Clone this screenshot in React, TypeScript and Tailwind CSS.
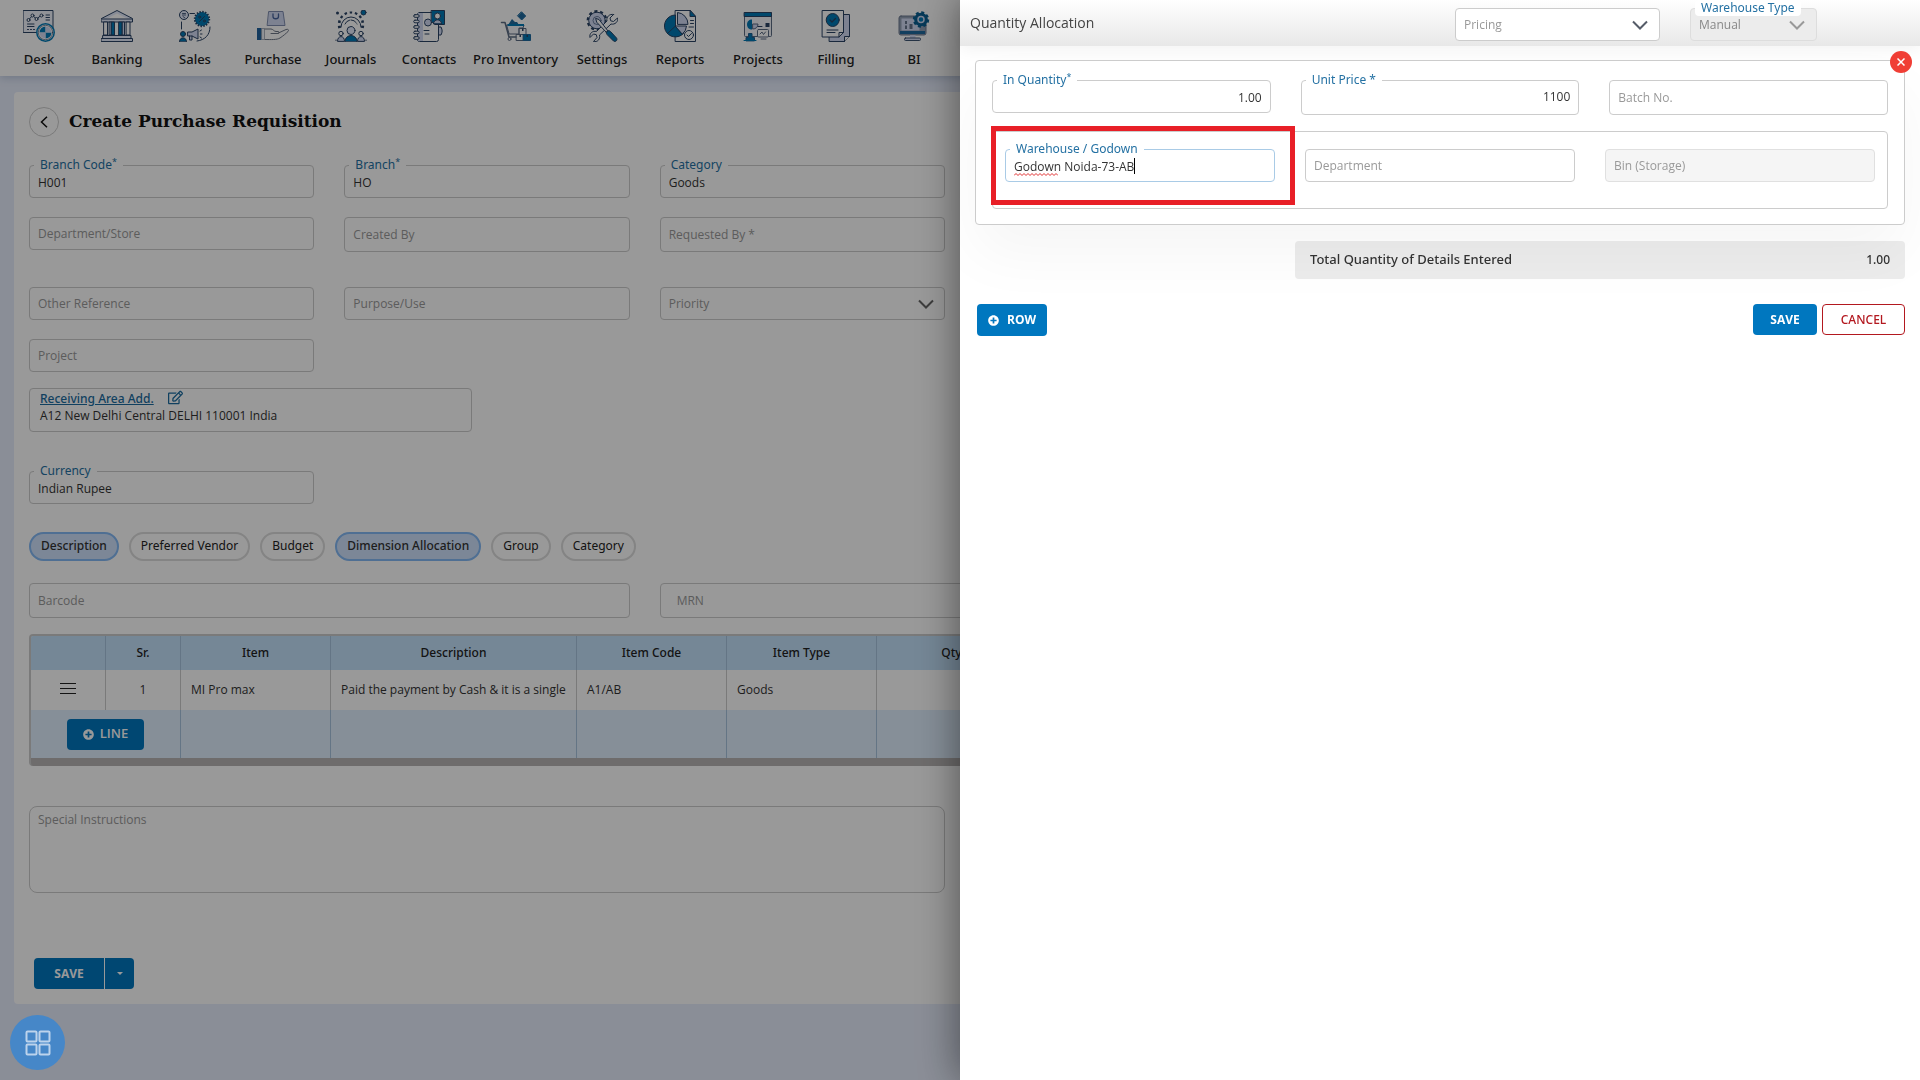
import type { ReactNode } from 'react';
import { FaPlusCircle, FaRegEdit } from 'react-icons/fa';

const navy = '#2a4365';
const blue = '#0079b5';
const pale = '#d0d9f2';

const Icon = ({ children }: { children: ReactNode }) => (
    <svg viewBox="0 0 32 32" className="size-8" fill="none" stroke={navy} strokeWidth="1" strokeLinecap="round" strokeLinejoin="round" aria-hidden="true">
        {children}
    </svg>
);

const DeskIcon = () => (
    <Icon>
        <path d="M0.5 .5h29.500v22h-29.500z" fill="#f1f4fc" />
        <path d="M5.500 10l4-4.500 4 3.500 4.500-3.500" />
        <circle cx="5.500" cy="10" r="1.500" fill="#fff" />
        <circle cx="9.500" cy="5.500" r="1.500" fill="#fff" />
        <circle cx="13.500" cy="9" r="1.500" fill="#fff" />
        <circle cx="18.500" cy="5.500" r="1.500" fill="#fff" />
        <path d="M23 5h3.500M23 7.500h3.500M23 10h3.500M4.500 14h6.500M4.500 16.500h6.500" />
        <path d="M4.500 19.500h7" strokeDasharray="1 2" />
        <circle cx="22.500" cy="22.500" r="8.700" fill="#fff" stroke={blue} strokeWidth="1.500" />
        <circle cx="22.500" cy="22.500" r="7.200" strokeWidth=".6" />
        <path d="M22.500 22.500v-6a6 6 0 0 0-6 6zM22.500 22.500v6a6 6 0 0 0 6-6z" fill={blue} stroke="none" />
        <path d="M22.500 22.500v-6a6 6 0 0 1 6 6zM22.500 22.500v6a6 6 0 0 1-6-6z" fill={pale} stroke="none" />
    </Icon>
);

const BankingIcon = () => (
    <Icon>
        <path d="M.5 8.500L16 .5l15.500 8v3.500H.5z" fill="#e3e9fb" />
        <path d="M5 9h22L16 3.500z" fill="#fff" stroke="none" />
        <path d="M1 9h30" />
        <path d="M3 12h3.500v13H3zM25.500 12h3.500v13h-3.500z" fill="#fff" />
        <path d="M8.500 12h2v13h-2zM21.500 12h2v13h-2z" fill={pale} />
        <path d="M10.500 12h3v13h-3zM18 12h3v13h-3z" fill={blue} />
        <path d="M2 25.500h28v3H2zM.5 28.500h31v3H.5z" fill="#e3e9fb" />
    </Icon>
);

const SalesIcon = () => (
    <Icon>
        <circle cx="5" cy="5" r="4.500" fill="#e3e9fb" />
        <path d="M3.500 3.500h3M3.500 5h3M4 6.500l2 1.500" strokeWidth=".8" />
        <path d="M11 3.500h4.500M2.500 12v7M31 17c0 8-5 13-13 14" />
        <circle cx="23" cy="9" r="7" fill={blue} stroke={navy} strokeWidth="2.400" strokeDasharray="1.400 1.350" strokeLinecap="butt" />
        <circle cx="23" cy="9" r="6.500" fill={blue} stroke="none" />
        <path d="M20.500 11.500l5-5" />
        <circle cx="20.700" cy="7" r="1" />
        <circle cx="25.400" cy="11" r="1" />
        <circle cx="4" cy="24" r="2.500" fill={blue} />
        <path d="M.5 31.500c0-5 7-5 7 0z" fill={blue} />
        <path d="M9 22h4l6-3v10l-6-3H9zM10.500 26v4h2.500v-4" fill={pale} />
        <path d="M21 21l1.500-1M21.500 24H23M21 27l1.500 1" />
    </Icon>
);

const PurchaseIcon = () => (
    <Icon>
        <g stroke="#7f8db0">
            <path d="M12 1.500h14l2 14H10.500z" fill={pale} />
            <path d="M16 4v2.500c0 3 5.500 3 5.500 0V4" stroke="#47639c" strokeWidth="1.300" />
        </g>
        <path d="M0 18h4.500v12H0z" fill="#20639f" stroke="none" />
        <path d="M5 18.500h2.500v11H5z" fill="#f3f5fb" stroke="#8b93a3" strokeWidth=".7" />
        <path d="M8 19h6c2 0 3 2.500 5 2.500h2c1.500 0 1.500 2 0 2h-7M21.500 23l7.500-3.500c2-.8 3.300.7 2 2-2 2-5 4.500-8 6.500-3 2-9 1.500-15 1.500" stroke="#6f7889" />
    </Icon>
);

const JournalsIcon = () => (
    <Icon>
        <path d="M5 18a11.500 11.500 0 1 1 22 0" strokeWidth="3.500" strokeDasharray="2.400 2.600" strokeLinecap="butt" />
        <path d="M7 17a9.500 9.500 0 1 1 18 0" stroke="#fff" strokeWidth="2" />
        <path d="M6 17a10 10 0 1 1 20 0" />
        <path d="M10 14a6.500 6.500 0 0 1 12 0" strokeDasharray="6 1.500" />
        <circle cx="2.500" cy="3" r="1.500" fill={navy} stroke="none" />
        <circle cx="28.500" cy="2.500" r="2.500" fill={blue} />
        <circle cx="16" cy="20.500" r="4" fill="#e3e9fb" />
        <path d="M10 31.500c0-8 12-8 12 0z" fill={blue} />
        <circle cx="6" cy="23.500" r="2.200" fill="#fff" />
        <circle cx="26" cy="23.500" r="2.200" fill="#fff" />
        <path d="M2.500 31c0-6 7-6 7 0zM22.500 31c0-6 7-6 7 0z" fill={pale} />
        <path d="M1 30v.5M31 30v.5" />
    </Icon>
);

const ContactsIcon = () => (
    <Icon>
        <rect x="4.500" y="2.500" width="21" height="29" rx="2" fill="#fff" />
        <path d="M5 3h5v28H5z" fill={pale} stroke="none" />
        <path d="M26 17h2c1.500 3 1.500 5 0 8h-2" fill={pale} />
        {[6, 11.5, 17, 22.5, 28].map((y) => (
            <rect key={y} x=".7" y={y - 1.3} width="5.500" height="2.600" rx="1.300" fill="#fff" />
        ))}
        <path d="M18.500 .5h13v14H22l-3.500-3z" fill={blue} />
        <circle cx="24.500" cy="6" r="3" fill="#fff" />
        <path d="M20.500 13.500c0-5 8-5 8 0z" fill={pale} />
        <circle cx="15" cy="12.500" r="3.500" fill={pale} />
        <path d="M11 20.500h5M12 24h4" />
    </Icon>
);

const InventoryIcon = () => (
    <Icon>
        <path d="M21.700 2l4 4-4 4-4-4z" fill="#1f6a9e" stroke="#1f6a9e" />
        <path d="M8 15l4-6 3 3h2l2 3z" fill="#1f6a9e" stroke="none" />
        <path d="M1.500 12.500h3.500l4 14.500h8" stroke="#5b6b83" strokeWidth="1.500" />
        <path d="M7 15h17l-1 3h-4v6H9.500z" fill="#f3f5fb" stroke="#5b6b83" />
        <path d="M7.500 14h16.500v2H7.500z" fill={blue} stroke="none" />
        <circle cx="9.500" cy="29" r="1.500" stroke="#5b6b83" />
        <path d="M19.500 18.500h6.500v6h-6.500z" fill="#fff" stroke="#5b6b83" />
        <path d="M16.500 24.500h7v6h-7z" fill="#fff" stroke="#5b6b83" />
        <path d="M23.500 24.500h7v6h-7z" fill={blue} stroke="#1f6a9e" />
        <path d="M22 18.500v2.500h1.500v-2.500zM26.500 25v2h1.500v-2zM19.500 25v2h1.500v-2z" fill={navy} stroke="none" />
    </Icon>
);

const SettingsIcon = () => (
    <Icon>
        <circle cx="11" cy="10.500" r="9" stroke={navy} strokeWidth="2.800" strokeDasharray="3 2.650" strokeLinecap="butt" />
        <circle cx="11" cy="10.500" r="8.300" fill={pale} />
        <circle cx="11" cy="10.500" r="4" strokeWidth=".6" />
        <path d="M27.500 4.500l-3.500 3.500.7 2.800 2.800.7L31.500 8c1 3.500-2.500 7-6.500 6L13.500 25c1 4-2 7.500-6 6.500l3.500-4-.7-2.800-2.800-.7-3.500 3.500c-1-4 2.500-7 6.500-6L21 11c-1-4 2.500-7.500 6.500-6.500z" fill="#fff" />
        <path d="M10 8.500l3 1L22 21l-1.500 1.500L11 12.500z" fill="#fff" />
        <path d="M20.500 22c1-1.500 2.500-2 4-.5l6 6.500c1.500 2-1 4.500-3 3L21.500 25c-1-1-1.500-2-1-3z" fill={blue} />
    </Icon>
);

const ReportsIcon = () => (
    <Icon>
        <path d="M11.500 .5H26l5.500 6v25h-20z" fill="#fff" />
        <path d="M26 .5v6h5.500z" fill={blue} />
        <path d="M11.500 16V5a11 11 0 1 0 8 18.500z" fill={blue} />
        <path d="M11.500 16l-8 7.500" />
        <path d="M11.500 16h11a11 11 0 0 1-4 8z" fill={pale} />
        <path d="M13.500 14V2.500A11.500 11.500 0 0 1 24 14z" fill={pale} />
        <circle cx="25" cy="25" r="4.500" fill="#fff" />
        <path d="M23 25l1.500 1.500 3-3M26.500 10.500h3M26.500 13.500h3M25 17h4.500" />
    </Icon>
);

const ProjectsIcon = () => (
    <Icon>
        <rect x="2.500" y="2.500" width="27" height="24" rx="1" fill="#f3f5fb" stroke="#5b6b83" />
        <path d="M2.500 2.500h27v4h-27z" fill={blue} stroke={navy} />
        <path d="M10 9.500v10c-3 0-5-2-5-5s2-5 5-5z" fill={blue} stroke="none" />
        <path d="M11 14h5c0 3-2 5-5 5z" fill={pale} stroke="#5b6b83" />
        <path d="M23.500 13h4v4h-4z" fill={navy} stroke="none" />
        <path d="M16 16.500h4" />
        <path d="M4 30.500v-3h2.500v-4H10v4h2.500v3z" fill={blue} stroke="#1f5c8f" />
        <path d="M2 30.500h12" stroke={blue} />
        <rect x="15.500" y="19.500" width="11" height="7.500" rx="1" fill="#fff" stroke="#5b6b83" />
        <path d="M18 24l2-2 1.500 2.500 2-2.500M19 29h5" stroke="#5b6b83" />
    </Icon>
);

const FillingIcon = () => (
    <Icon>
        <path d="M9.500 4.500h20v22l-5 5h-15z" fill={pale} />
        <path d="M24.500 31.500v-5h5" fill="#fff" />
        <path d="M2.500 .5h21v22l-4.500 4.500H2.500z" fill="#fff" />
        <path d="M19 27v-4.500h4.500" />
        <circle cx="12.700" cy="10" r="6.500" fill={blue} />
        <path d="M10 10l2 2 3.500-3.500" stroke={navy} strokeWidth="1.300" />
        <path d="M7 20h11M7 22.500h8" />
    </Icon>
);

const BIIcon = () => (
    <Icon>
        <rect x="1" y="6" width="27" height="19" rx="2" fill="#93a0b5" stroke="#6c7a90" />
        <path d="M3.500 8.500h18v12h-18z" fill={pale} stroke="none" />
        <path d="M2 21h25v3H2z" fill="#1f6a9e" stroke="none" />
        <path d="M7 11h2v3H7zM7 15.500h2V19H7zM11.500 14h3v5h-3z" fill="#66758c" stroke="none" />
        <path d="M12 25h5.500v3H12z" fill={pale} stroke="none" />
        <rect x="6.500" y="28" width="16" height="2.500" rx="1" fill={pale} stroke="#3f5573" />
        <circle cx="23" cy="9.500" r="6.800" fill={blue} stroke="#0b5f91" strokeWidth="2.800" strokeDasharray="2.900 2.440" strokeLinecap="butt" />
        <circle cx="23" cy="9.500" r="6.500" fill="#0b5f91" stroke="none" />
        <circle cx="23" cy="9.500" r="3" fill={blue} stroke={pale} strokeWidth="1.500" />
    </Icon>
);

const menu = [
    { label: 'Desk', icon: <DeskIcon /> },
    { label: 'Banking', icon: <BankingIcon /> },
    { label: 'Sales', icon: <SalesIcon /> },
    { label: 'Purchase', icon: <PurchaseIcon /> },
    { label: 'Journals', icon: <JournalsIcon /> },
    { label: 'Contacts', icon: <ContactsIcon /> },
    { label: 'Pro Inventory', icon: <InventoryIcon /> },
    { label: 'Settings', icon: <SettingsIcon /> },
    { label: 'Reports', icon: <ReportsIcon /> },
    { label: 'Projects', icon: <ProjectsIcon /> },
    { label: 'Filling', icon: <FillingIcon /> },
    { label: 'BI', icon: <BIIcon /> },
];

const Chevron = ({ className }: { className: string }) => (
    <svg viewBox="0 0 16 10" className={`pointer-events-none absolute top-3 h-[10px] w-4 ${className}`} fill="none" stroke="currentColor" strokeWidth="2" aria-hidden="true">
        <path d="M1 1.500l7 7 7-7" />
    </svg>
);

type FieldProps = {
    id: string;
    label: string;
    value?: string;
    required?: boolean;
    tall?: boolean;
    right?: boolean;
    focus?: boolean;
    disabled?: boolean;
    indent?: boolean;
    className?: string;
    children?: ReactNode;
};

// Outlined text box, the label floats on the border once there is a value
const Field = ({ id, label, value, required, tall, right, focus, disabled, indent, className = '', children }: FieldProps) => (
    <div className={`relative ${className}`}>
        <input
            id={id}
            type="text"
            defaultValue={value}
            placeholder={value ? undefined : label}
            aria-label={value ? undefined : label}
            disabled={disabled}
            spellCheck={false}
            className={`block w-full rounded border text-xs text-[#333] placeholder:text-[#999] ${tall ? 'h-[35px]' : 'h-[33px]'} ${value && !tall ? 'pt-[2px]' : ''} ${value && tall ? 'pb-[2px]' : ''} ${indent ? 'px-4' : 'px-2'} ${right ? 'text-right' : ''} ${focus ? 'border-[#a9cbe6]' : disabled ? 'border-[#e0e0e0] bg-[#f5f5f5]' : 'border-[#ccc]'}`}
        />
        {value && (
            <label htmlFor={id} className="absolute -top-2 left-[5px] bg-white px-1.5 font-[Noto_Sans] text-xs/[16px] text-[#2471a3]">
                {label}
                {required && <sup className="text-[9px]">*</sup>}
            </label>
        )}
        {children}
    </div>
);

const chips = [
    { label: 'Description', on: true },
    { label: 'Preferred Vendor' },
    { label: 'Budget' },
    { label: 'Dimension Allocation', on: true },
    { label: 'Group' },
    { label: 'Category' },
];

const Requisition = () => (
    <div className="min-h-screen bg-[#e7edfc]">
        <nav className="flex h-[76px] bg-white shadow-[0_2px_8px_rgba(60,90,130,0.25)]">
            {menu.map((item) => (
                <a key={item.label} href="#" className="flex min-w-[78px] flex-col items-center px-[5px] pt-[10px] font-[Noto_Sans] text-[13px]/[18px] font-medium whitespace-nowrap text-[#222]">
                    {item.icon}
                    <span className="mt-2">{item.label}</span>
                </a>
            ))}
        </nav>

        <main className="mx-[14px] mt-4 rounded bg-white p-[15px]">
            <div className="flex items-center gap-[10px]">
                <button type="button" aria-label="Back" className="flex size-[30px] items-center justify-center rounded-full border border-[#ccc]">
                    <svg viewBox="0 0 8 12" className="h-3 w-2" fill="none" stroke="#111" strokeWidth="1.500" aria-hidden="true">
                        <path d="M7 .8L1.500 6 7 11.200" />
                    </svg>
                </button>
                <h1 className="font-['DejaVu_Serif',serif] text-[17px] font-bold text-[#111]">Create Purchase Requisition</h1>
            </div>

            <form>
                <div className="mt-7 grid grid-cols-6 gap-x-[30px]">
                    <Field id="branch-code" label="Branch Code" value="H001" required />
                    <Field id="branch" label="Branch" value="HO" required />
                    <Field id="category" label="Category" value="Goods" />
                </div>
                <div className="mt-[19px] grid grid-cols-6 gap-x-[30px]">
                    <Field id="store" label="Department/Store" />
                    <Field id="created-by" label="Created By" tall />
                    <Field id="requested-by" label="Requested By *" tall />
                </div>
                <div className="mt-[35px] grid grid-cols-6 gap-x-[30px] gap-y-[19px]">
                    <Field id="other-reference" label="Other Reference" />
                    <Field id="purpose" label="Purpose/Use" />
                    <div className="relative">
                        <select aria-label="Priority" className="block h-[33px] w-full appearance-none rounded border border-[#ccc] px-2 text-xs text-[#999]">
                            <option>Priority</option>
                        </select>
                        <Chevron className="right-[11px] text-[#666]" />
                    </div>
                    <Field id="project" label="Project" className="col-start-1" />
                </div>

                <div className="mt-4 grid grid-cols-4 gap-x-[30px]">
                    <div className="h-11 rounded border border-[#ccc] px-[10px] pt-px text-xs/[17px] text-[#333]">
                        <div className="flex gap-[14px]">
                            <a href="#" className="font-[Noto_Sans] font-medium text-[#1b6ca0] underline">Receiving Area Add.</a>
                            <FaRegEdit className="size-[15px] text-[#1b6ca0]" />
                        </div>
                        <p>A12 New Delhi Central DELHI 110001 India</p>
                    </div>
                </div>

                <div className="mt-[39px] grid grid-cols-6 gap-x-[30px]">
                    <Field id="currency" label="Currency" value="Indian Rupee" />
                </div>

                <div className="mt-7 flex gap-[10px]">
                    {chips.map((chip) => (
                        <button
                            key={chip.label}
                            type="button"
                            className={`h-[29px] rounded-full border-2 px-[10px] pb-[2px] font-[Noto_Sans] text-xs ${chip.on ? 'border-[#84b9f5] bg-[#cfe2fc] font-medium text-[#333]' : 'border-[#dcdcdc] text-[#222]'}`}
                        >
                            {chip.label}
                        </button>
                    ))}
                </div>

                <div className="mt-[22px] grid grid-cols-3 gap-x-[30px]">
                    <Field id="barcode" label="Barcode" tall />
                    <Field id="mrn" label="MRN" tall indent />
                </div>

                <div className="mt-4 overflow-hidden rounded border-2 border-b-0 border-[#ccc] bg-[#b8b5b5] pb-2">
                    <table className="w-full table-fixed border-separate border-spacing-0 bg-white text-xs text-[#333]">
                        <thead>
                            <tr className="h-[34px] bg-[#c3e1fa] font-[Noto_Sans] text-[#222] *:border-r *:border-[#a7c4de] *:p-0 *:font-medium">
                                <th className="w-[75px]" aria-label="Menu"></th>
                                <th className="w-[75px]">Sr.</th>
                                <th className="w-[150px]">Item</th>
                                <th className="w-[246px]">Description</th>
                                <th className="w-[150px]">Item Code</th>
                                <th className="w-[150px]">Item Type</th>
                                <th className="w-[150px]">Qty</th>
                                <th aria-label="Amount"></th>
                            </tr>
                        </thead>
                        <tbody>
                            <tr className="h-10 *:border-r *:border-[#ccc] *:px-[10px] *:py-0 *:whitespace-nowrap">
                                <td>
                                    <button type="button" aria-label="Row menu" className="mx-auto flex w-4 flex-col gap-1 pb-1 *:h-px *:bg-[#222]">
                                        <span></span>
                                        <span></span>
                                        <span></span>
                                    </button>
                                </td>
                                <td className="text-center">1</td>
                                <td>MI Pro max</td>
                                <td>Paid the payment by Cash &amp; it is a single</td>
                                <td>A1/AB</td>
                                <td>Goods</td>
                                <td></td>
                                <td></td>
                            </tr>
                            <tr className="h-12 bg-[#dfeefd] *:border-r *:border-[#a7c4de] *:p-0">
                                <td colSpan={2}>
                                    <button type="button" className="mx-auto flex h-[31px] w-[77px] items-center justify-center gap-1.5 rounded bg-[#0077bf] text-[13px] font-semibold text-white">
                                        <FaPlusCircle className="size-[11px]" />
                                        LINE
                                    </button>
                                </td>
                                <td></td>
                                <td></td>
                                <td></td>
                                <td></td>
                                <td></td>
                                <td></td>
                            </tr>
                        </tbody>
                    </table>
                </div>

                <div className="mt-10 grid grid-cols-2 gap-x-[30px]">
                    <textarea aria-label="Special Instructions" placeholder="Special Instructions" className="block h-[87px] resize-none rounded-lg border border-[#ccc] px-2 py-1 text-xs/[18px] placeholder:text-[#999]"></textarea>
                </div>

                <div className="mt-[65px] ml-[5px] flex gap-px">
                    <button type="button" className="h-[31px] w-[70px] rounded-l bg-[#0077bf] text-xs font-bold text-white">SAVE</button>
                    <button type="button" aria-label="More save options" className="flex h-[31px] w-[29px] items-center justify-center rounded-r bg-[#0077bf] text-white">
                        <svg viewBox="0 0 6 3" className="h-[3px] w-1.5" fill="currentColor" aria-hidden="true">
                            <path d="M0 0h6L3 3z" />
                        </svg>
                    </button>
                </div>
            </form>
        </main>
    </div>
);

const Allocation = () => (
    <aside className="fixed inset-y-0 right-0 w-1/2 bg-white shadow-[0_0_40px_rgba(0,0,0,0.5)]">
        <header className="flex h-[46px] items-start bg-linear-to-b from-white to-[#e8e8e8] pr-[103px] pl-[10px] shadow-[0_4px_16px_rgba(0,0,0,0.05)]">
            <h2 className="mt-3 flex-1 text-sm/[22px] text-[#444]">Quantity Allocation</h2>
            <div className="relative mt-2 w-[205px]">
                <select aria-label="Pricing" className="block h-[33px] w-full appearance-none rounded border border-[#ccc] bg-white px-2 text-xs text-[#999]">
                    <option>Pricing</option>
                </select>
                <Chevron className="right-[12px] text-[#555c68]" />
            </div>
            <div className="relative mt-2 ml-[30px] w-[127px]">
                <select id="warehouse-type" disabled className="block h-[33px] w-full appearance-none rounded border border-[#ddd] bg-[#ececec] px-2 text-xs text-[#888] opacity-100">
                    <option>Manual</option>
                </select>
                <label htmlFor="warehouse-type" className="absolute -top-2 left-[5px] rounded bg-white px-1.5 font-[Noto_Sans] text-xs/[16px] whitespace-nowrap text-[#2471a3]">Warehouse Type</label>
                <Chevron className="right-[12px] text-[#999]" />
            </div>
        </header>

        <div className="px-[15px] pt-[14px]">
            <section className="relative rounded border border-[#ccc] bg-white px-4 pt-[19px] pb-[15px] shadow-[0_30px_60px_rgba(0,0,0,0.04)]">
                <button type="button" aria-label="Remove" className="absolute -top-[10px] -right-2 flex size-[22px] items-center justify-center rounded-full bg-[#f03e35]">
                    <svg viewBox="0 0 8 8" className="size-2" stroke="#fff" strokeWidth="1.500" aria-hidden="true">
                        <path d="M.5 .5l7 7M7.500 .5l-7 7" />
                    </svg>
                </button>
                <div className="grid grid-cols-3 gap-x-[30px]">
                    <Field id="in-quantity" label="In Quantity" value="1.00" required right />
                    <Field id="unit-price" label="Unit Price *" value="1100" tall right />
                    <Field id="batch" label="Batch No." tall />
                </div>
                <div className="relative mt-4 grid h-[78px] grid-cols-3 gap-x-[30px] rounded border border-[#ccc] px-3 pt-[17px]">
                    <Field id="warehouse" label="Warehouse / Godown" value="Godown Noida-73-AB" focus>
                        <svg viewBox="0 0 44 3" className="absolute top-[24px] left-[9px] h-[3px] w-11" fill="none" stroke="#e03131" aria-hidden="true">
                            <path d="M0 2.500l2-2 2 2 2-2 2 2 2-2 2 2 2-2 2 2 2-2 2 2 2-2 2 2 2-2 2 2 2-2 2 2 2-2 2 2 2-2 2 2 2-2 2 2" />
                        </svg>
                        <span className="absolute top-[9px] left-[129px] h-4 w-px bg-black"></span>
                    </Field>
                    <Field id="department" label="Department" />
                    <Field id="bin" label="Bin (Storage)" disabled />
                    {/* highlight round the warehouse box */}
                    <div className="pointer-events-none absolute -top-1.5 -left-0.5 h-[79px] w-[304px] border-5 border-[#e81f27]"></div>
                </div>
            </section>

            <div className="mt-4 ml-[320px] flex h-[38px] items-center justify-between rounded-sm bg-[#ececec] px-[15px] font-[Noto_Sans] text-[13px] font-medium text-[#333]">
                <span>Total Quantity of Details Entered</span>
                <span className="text-xs">1.00</span>
            </div>

            <div className="mt-[25px] ml-0.5 flex gap-[5px] text-xs">
                <button type="button" className="mr-auto flex h-8 w-[70px] items-center justify-center gap-2 rounded bg-[#0077bf] font-bold text-white">
                    <FaPlusCircle className="size-[11px]" />
                    ROW
                </button>
                <button type="button" className="h-[31px] w-16 rounded bg-[#0077bf] font-bold text-white">SAVE</button>
                <button type="button" className="h-[31px] w-[83px] rounded border border-[#b3181f] font-[Noto_Sans] font-medium text-[#b3181f]">CANCEL</button>
            </div>
        </div>
    </aside>
);

export default function App() {
    return (
        <div className="font-['Open_Sans','Noto_Sans',sans-serif]">
            <Requisition />
            <div className="fixed inset-0 bg-black/40"></div>
            <button type="button" aria-label="Apps" className="fixed bottom-[10px] left-[10px] flex size-[55px] items-center justify-center rounded-full bg-[#4687c8]">
                <svg viewBox="0 0 26 26" className="size-[26px]" fill="none" stroke="#bcd3ec" strokeWidth="2" aria-hidden="true">
                    <rect x="1.500" y="1.500" width="10" height="10" rx="1" />
                    <rect x="14.500" y="1.500" width="10" height="10" rx="1" />
                    <rect x="1.500" y="14.500" width="10" height="10" rx="1" />
                    <rect x="14.500" y="14.500" width="10" height="10" rx="1" />
                </svg>
            </button>
            <Allocation />
        </div>
    );
}
